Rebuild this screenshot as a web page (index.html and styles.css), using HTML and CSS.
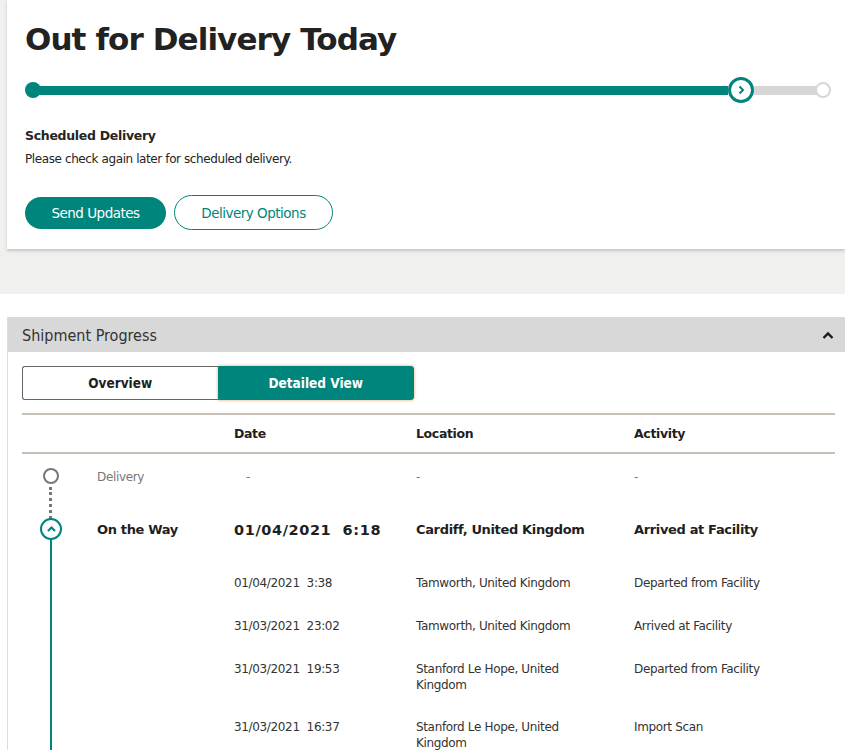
FILE: index.html
```html
<!DOCTYPE html>
<html lang="en">
<head>
    <meta charset="UTF-8">
    <meta name="viewport" content="width=device-width, initial-scale=1.0">
    <title>Tracking Details</title>
    <link rel="stylesheet" href="styles.css">
</head>
<body>
    <div class="top">
        <section class="card">
            <h1>Out for Delivery Today</h1>

            <div class="progress">
                <span class="dot dot-start"></span>
                <div class="bar bar-done"></div>
                <span class="current">
                    <svg width="12" height="12" viewBox="0 0 12 12"><path d="M4.5 2.5 L8 6 L4.5 9.5" fill="none" stroke="#00857d" stroke-width="2"/></svg>
                </span>
                <div class="bar bar-todo"></div>
                <span class="dot dot-end"></span>
            </div>

            <h3>Scheduled Delivery</h3>
            <p>Please check again later for scheduled delivery.</p>

            <div class="actions">
                <button class="btn btn-primary">Send Updates</button>
                <button class="btn btn-outline">Delivery Options</button>
            </div>
        </section>
    </div>

    <div class="bottom">
        <section class="panel">
            <header class="panel-head">
                <span>Shipment Progress</span>
                <svg width="14" height="10" viewBox="0 0 14 10"><path d="M2.5 8 L7 3.5 L11.5 8" fill="none" stroke="#1a1a1a" stroke-width="2.4"/></svg>
            </header>

            <div class="panel-body">
                <div class="toggle">
                    <button>Overview</button>
                    <button class="active">Detailed View</button>
                </div>

                <table class="history">
                    <thead>
                        <tr>
                            <th class="col-icon"></th>
                            <th class="col-status"></th>
                            <th class="col-date">Date</th>
                            <th class="col-loc">Location</th>
                            <th class="col-act">Activity</th>
                        </tr>
                    </thead>
                    <tbody>
                        <tr class="row-pending">
                            <td class="icon"><span class="node node-pending"></span></td>
                            <td>Delivery</td>
                            <td class="dash-date">-</td>
                            <td>-</td>
                            <td>-</td>
                        </tr>
                        <tr class="row-current">
                            <td class="icon line-below">
                                <span class="node node-current">
                                    <svg width="11" height="11" viewBox="0 0 11 11"><path d="M2 7 L5.5 3.5 L9 7" fill="none" stroke="#00857d" stroke-width="2.2"/></svg>
                                </span>
                            </td>
                            <td>On the Way</td>
                            <td class="date-big">01/04/2021&nbsp; 6:18</td>
                            <td>Cardiff, United Kingdom</td>
                            <td>Arrived at Facility</td>
                        </tr>
                        <tr class="row-sub">
                            <td class="icon line"></td>
                            <td></td>
                            <td>01/04/2021&nbsp; 3:38</td>
                            <td>Tamworth, United Kingdom</td>
                            <td>Departed from Facility</td>
                        </tr>
                        <tr class="row-sub">
                            <td class="icon line"></td>
                            <td></td>
                            <td>31/03/2021&nbsp; 23:02</td>
                            <td>Tamworth, United Kingdom</td>
                            <td>Arrived at Facility</td>
                        </tr>
                        <tr class="row-sub">
                            <td class="icon line"></td>
                            <td></td>
                            <td>31/03/2021&nbsp; 19:53</td>
                            <td>Stanford Le Hope, United Kingdom</td>
                            <td>Departed from Facility</td>
                        </tr>
                        <tr class="row-sub">
                            <td class="icon line"></td>
                            <td></td>
                            <td>31/03/2021&nbsp; 16:37</td>
                            <td>Stanford Le Hope, United Kingdom</td>
                            <td>Import Scan</td>
                        </tr>
                    </tbody>
                </table>
            </div>
        </section>
    </div>
</body>
</html>
```

FILE: styles.css
```css
:root {
    --teal: #00857d;
    --text: #242424;
    --muted: #777777;
    --page-bg: #f0f0ef;
    --head-bg: #d8d8d8;
    --rule: #c8bfb5;
}

body {
    margin: 0;
    font-family: "DejaVu Sans", Verdana, sans-serif;
    color: var(--text);
    background: #ffffff;
    overflow: hidden;
}

.top {
    background: var(--page-bg);
    padding: 0 0 45px 7px;
}

.card {
    background: #ffffff;
    padding: 20px 14px 19px 18px;
    box-shadow: 0 2px 3px rgba(0, 0, 0, 0.18);
}

h1 {
    margin: 0;
    font-size: 31px;
    line-height: 38px;
    font-weight: bold;
    letter-spacing: -0.9px;
    color: #222222;
}

.progress {
    display: flex;
    align-items: center;
    margin-top: 19px;
    height: 26px;
}

.dot {
    width: 16px;
    height: 16px;
    border-radius: 50%;
    box-sizing: border-box;
    flex: none;
    position: relative;
    z-index: 1;
}

.dot-start {
    background: var(--teal);
}

.dot-end {
    background: #ffffff;
    border: 2px solid #d6d6d6;
    margin-left: -8px;
}

.bar {
    height: 9px;
}

.bar-done {
    flex: 1;
    margin-left: -8px;
    background: var(--teal);
}

.bar-todo {
    width: 69px;
    background: #d6d6d6;
}

.current {
    width: 26px;
    height: 26px;
    box-sizing: border-box;
    border: 3px solid var(--teal);
    border-radius: 50%;
    background: #ffffff;
    display: flex;
    align-items: center;
    justify-content: center;
    flex: none;
}

h3 {
    margin: 25px 0 0;
    font-size: 12.5px;
    line-height: 16px;
    font-weight: bold;
    letter-spacing: -0.3px;
}

p {
    margin: 7px 0 0;
    font-size: 12px;
    line-height: 16px;
    letter-spacing: -0.4px;
}

.actions {
    display: flex;
    align-items: center;
    gap: 8px;
    margin-top: 28px;
}

.btn {
    font-family: inherit;
    font-size: 13.5px;
    letter-spacing: -0.5px;
    border-radius: 18px;
    cursor: pointer;
}

.btn-primary {
    width: 141px;
    height: 32px;
    background: var(--teal);
    color: #ffffff;
    border: none;
}

.btn-outline {
    width: 159px;
    height: 35px;
    background: #ffffff;
    color: var(--teal);
    border: 1.5px solid var(--teal);
}

.bottom {
    padding: 23px 0 0 7px;
}

.panel {
    border-left: 1px solid #dddddd;
}

.panel-head {
    display: flex;
    align-items: center;
    justify-content: space-between;
    height: 35px;
    padding: 2px 10px 0 14px;
    box-sizing: border-box;
    background: var(--head-bg);
    font-family: "DejaVu Sans Condensed", "Liberation Sans Narrow", "DejaVu Sans", sans-serif;
    font-stretch: condensed;
    font-size: 16px;
    color: #333333;
}

.panel-head svg {
    margin-top: -2px;
}

.panel-body {
    padding: 14px 10px 0 14px;
}

.toggle {
    display: flex;
    width: 392px;
    height: 34px;
}

.toggle button {
    flex: 1;
    font-family: "DejaVu Sans Condensed", "Liberation Sans Narrow", "DejaVu Sans", sans-serif;
    font-stretch: condensed;
    font-weight: bold;
    font-size: 13.5px;
    color: #1f1f1f;
    background: #ffffff;
    border: 1px solid #666666;
    border-radius: 3px 0 0 3px;
    border-right: none;
}

.toggle button.active {
    background: var(--teal);
    color: #ffffff;
    border: 1px solid var(--teal);
    border-radius: 0 3px 3px 0;
    box-shadow: 0 0 3px rgba(200, 110, 40, 0.7);
}

.history {
    width: 813px;
    margin-top: 13px;
    border-collapse: collapse;
    table-layout: fixed;
    font-size: 12px;
    line-height: 16px;
    letter-spacing: -0.35px;
    color: #333333;
}

.history thead tr {
    border-top: 2px solid var(--rule);
    border-bottom: 2px solid var(--rule);
}

.history th {
    text-align: left;
    font-size: 12.5px;
    font-weight: bold;
    color: #1f1f1f;
    height: 36px;
    padding: 1px 0 0;
}

.col-icon { width: 75px; }
.col-status { width: 137px; }
.col-date { width: 182px; }
.col-loc { width: 218px; }

.history td {
    vertical-align: top;
    padding: 0;
}

.history td:nth-child(4) {
    padding-right: 42px;
}

.row-pending td {
    padding: 15px 0 20px;
    color: var(--muted);
}

.row-pending .dash-date {
    padding-left: 12px;
}

.row-current td {
    padding: 16px 0 25px;
    font-size: 13px;
    line-height: 18px;
    font-weight: bold;
    color: #1f1f1f;
}

.row-current .date-big {
    font-size: 14.5px;
    letter-spacing: 0.6px;
}

.row-sub td {
    padding: 10px 0 17px;
}

.row-sub td:nth-child(4) {
    padding-bottom: 16px;
}

.icon {
    position: relative;
}

.node {
    display: block;
    box-sizing: border-box;
    border-radius: 50%;
    background: #ffffff;
    position: relative;
}

.node-pending {
    width: 16px;
    height: 16px;
    margin: -1px 0 0 21px;
    border: 2px solid var(--muted);
}

.node-pending::after {
    content: "";
    position: absolute;
    left: 4px;
    top: 17px;
    height: 32px;
    border-left: 3px dotted var(--muted);
}

.node-current {
    width: 22px;
    height: 22px;
    margin: -3px 0 0 18px;
    border: 2px solid var(--teal);
    display: flex;
    align-items: center;
    justify-content: center;
    z-index: 1;
}

.row-current .line-below {
    background: linear-gradient(var(--teal), var(--teal)) no-repeat 28px 100% / 2px 60%;
}

.row-sub .line {
    background: linear-gradient(var(--teal), var(--teal)) no-repeat 28px 0 / 2px 100%;
}
```
